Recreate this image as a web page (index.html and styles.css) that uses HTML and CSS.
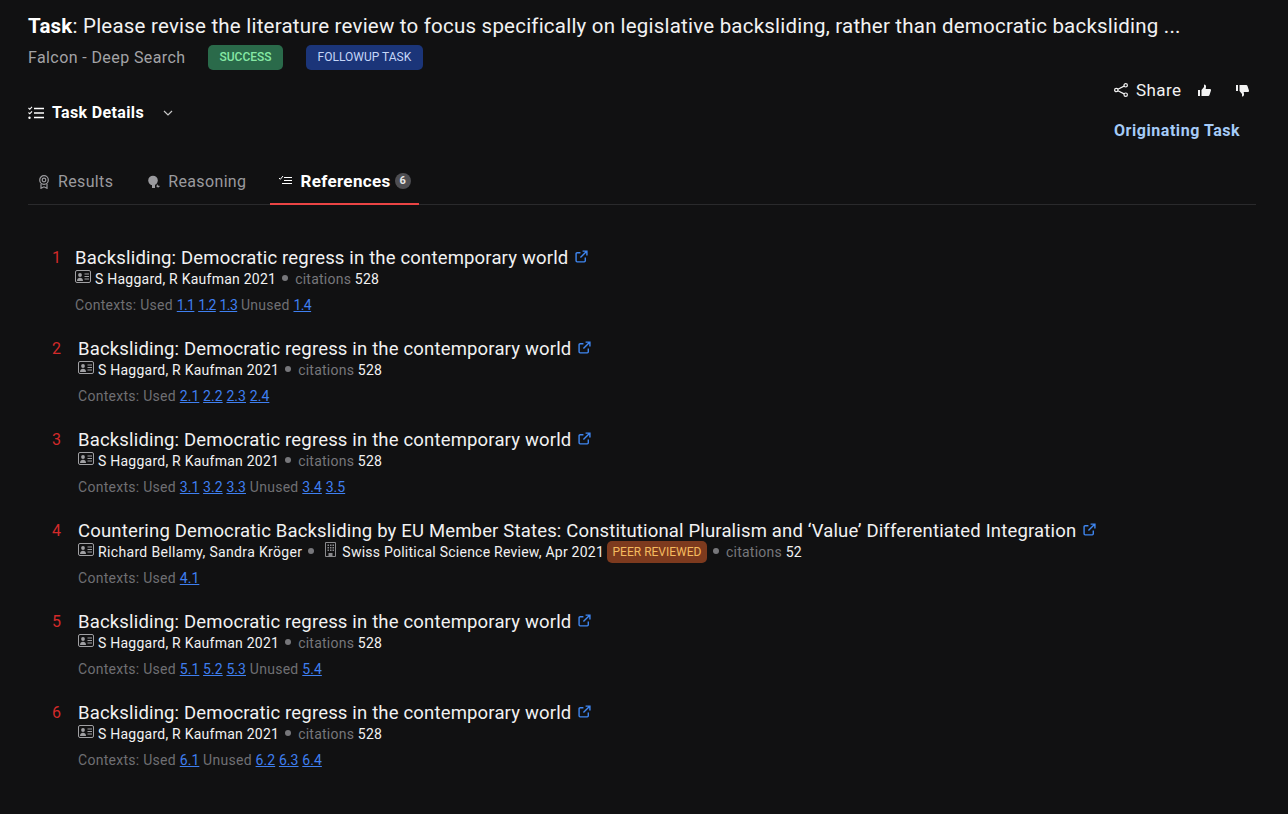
FILE: index.html
```html
<!DOCTYPE html>
<html lang="en">

<head>
    <meta charset="UTF-8">
    <title>Task References</title>
    <link rel="stylesheet" href="styles.css">
</head>

<body>
    <svg class="defs" width="0" height="0">
        <symbol id="card" viewBox="0 0 16 13">
            <rect x="0.5" y="0.5" width="15" height="12" rx="1.5" fill="none" stroke="currentColor"/>
            <circle cx="5" cy="5" r="1.9" fill="currentColor"/>
            <path d="M2 11c0-2.2 1.4-3.2 3-3.2s3 1 3 3.2z" fill="currentColor"/>
            <path d="M9.5 4h4.5M9.5 6.5h4.5M9.5 9h4.5" stroke="currentColor"/>
        </symbol>
        <symbol id="ext" viewBox="0 0 12 12">
            <path d="M9.5 7v3a1 1 0 0 1-1 1H2a1 1 0 0 1-1-1V3.500a1 1 0 0 1 1-1h3M7 1h4v4M11 1L5 7" fill="none" stroke="currentColor" stroke-width="1.300"/>
        </symbol>
    </svg>

    <header class="task-head">
        <h1 class="task-title"><b>Task</b>: Please revise the literature review to focus specifically on legislative backsliding, rather than democratic backsliding ...</h1>
        <div class="task-meta">
            <span class="agent">Falcon - Deep Search</span>
            <span class="badge badge-success">SUCCESS</span>
            <span class="badge badge-followup">FOLLOWUP TASK</span>
        </div>
        <div class="task-row">
            <div class="details">
                <svg class="details-icon" viewBox="0 0 16 14" width="16" height="14">
                    <path d="M6 2.500h10M6 7h10M6 11.500h10" stroke="currentColor" stroke-width="1.500"/>
                    <path d="M0.500 2l1.300 1.300L4 0.800M0.500 6.500l1.300 1.300L4 5.300" fill="none" stroke="currentColor" stroke-width="1.100"/>
                    <circle cx="1.500" cy="11.700" r="1.200" fill="currentColor"/>
                </svg>
                <span>Task Details</span>
                <svg class="chevron" viewBox="0 0 10 6" width="10" height="6">
                    <path d="M1 1l4 4 4-4" fill="none" stroke="currentColor" stroke-width="1.200"/>
                </svg>
            </div>
            <div class="actions">
                <div class="action-row">
                    <svg viewBox="0 0 14 14" width="14" height="14">
                        <g fill="none" stroke="currentColor" stroke-width="1.200">
                            <circle cx="11.700" cy="2.300" r="1.700"/>
                            <circle cx="2.300" cy="7" r="1.700"/>
                            <circle cx="11.700" cy="11.700" r="1.700"/>
                            <path d="M3.900 6.200l6.200-3.100M3.900 7.800l6.200 3.100"/>
                        </g>
                    </svg>
                    <span class="share">Share</span>
                    <svg class="thumb" viewBox="0 0 13 13" width="13" height="13">
                        <path d="M0 6h2v6H0zM3.500 6l2.500-3V0.500c1.500 0 2.200 1.200 2 2.500L7.700 5H12c1 0 1.200 1 .9 1.700l-1.500 4.600c-.2.500-.6.700-1.100.7H3.500z" fill="currentColor"/>
                    </svg>
                    <svg class="thumb thumb-down" viewBox="0 0 13 13" width="13" height="13">
                        <path d="M0 1h2v6H0zM3.500 7l2.500 3v2.500c1.500 0 2.200-1.200 2-2.500L7.700 8H12c1 0 1.200-1 .9-1.700L11.400 1.700C11.200 1.200 10.800 1 10.300 1H3.500z" fill="currentColor"/>
                    </svg>
                </div>
                <a class="originating">Originating Task</a>
            </div>
        </div>
    </header>

    <nav class="tabs">
        <div class="tab">
            <svg viewBox="0 0 12 14" width="12" height="14">
                <g fill="none" stroke="currentColor" stroke-width="1.200">
                    <circle cx="6" cy="5" r="4.300"/>
                    <circle cx="6" cy="5" r="1.800"/>
                    <path d="M3 9v4.300l3-1.500 3 1.500V9"/>
                </g>
            </svg>
            <span>Results</span>
        </div>
        <div class="tab tab-reasoning">
            <svg viewBox="0 0 14 14" width="14" height="14">
                <circle cx="6" cy="5.500" r="4.800" fill="currentColor"/>
                <path d="M5 10h3v3H5zM10 9l1 1.500 2 .5-1.500 1.500-2-.5z" fill="currentColor"/>
            </svg>
            <span>Reasoning</span>
        </div>
        <div class="tab tab-active">
            <svg viewBox="0 0 13 11" width="13" height="11">
                <path d="M5 2.500h8M5 5.500h8M3 8.500h10" stroke="currentColor" stroke-width="1.200"/>
                <path d="M0 3l1.300 1.300L4 1" fill="none" stroke="currentColor"/>
            </svg>
            <span>References</span>
            <span class="count">6</span>
        </div>
    </nav>

    <main class="refs">
        <article class="ref">
            <span class="ref-num">1</span>
            <div class="ref-body">
                <div class="ref-title">Backsliding: Democratic regress in the contemporary world <svg class="ext"><use href="#ext"/></svg></div>
                <div class="ref-meta">
                    <svg class="card"><use href="#card"/></svg>
                    <span>S Haggard, R Kaufman 2021</span>
                    <i class="dot"></i>
                    <span><span class="muted">citations</span> 528</span>
                </div>
                <div class="ref-contexts">Contexts: Used <a>1.1</a> <a>1.2</a> <a>1.3</a> Unused <a>1.4</a></div>
            </div>
        </article>
        <article class="ref">
            <span class="ref-num">2</span>
            <div class="ref-body">
                <div class="ref-title">Backsliding: Democratic regress in the contemporary world <svg class="ext"><use href="#ext"/></svg></div>
                <div class="ref-meta">
                    <svg class="card"><use href="#card"/></svg>
                    <span>S Haggard, R Kaufman 2021</span>
                    <i class="dot"></i>
                    <span><span class="muted">citations</span> 528</span>
                </div>
                <div class="ref-contexts">Contexts: Used <a>2.1</a> <a>2.2</a> <a>2.3</a> <a>2.4</a></div>
            </div>
        </article>
        <article class="ref">
            <span class="ref-num">3</span>
            <div class="ref-body">
                <div class="ref-title">Backsliding: Democratic regress in the contemporary world <svg class="ext"><use href="#ext"/></svg></div>
                <div class="ref-meta">
                    <svg class="card"><use href="#card"/></svg>
                    <span>S Haggard, R Kaufman 2021</span>
                    <i class="dot"></i>
                    <span><span class="muted">citations</span> 528</span>
                </div>
                <div class="ref-contexts">Contexts: Used <a>3.1</a> <a>3.2</a> <a>3.3</a> Unused <a>3.4</a> <a>3.5</a></div>
            </div>
        </article>
        <article class="ref">
            <span class="ref-num">4</span>
            <div class="ref-body">
                <div class="ref-title">Countering Democratic Backsliding by EU Member States: Constitutional Pluralism and ‘Value’ Differentiated Integration <svg class="ext"><use href="#ext"/></svg></div>
                <div class="ref-meta">
                    <svg class="card"><use href="#card"/></svg>
                    <span class="authors">Richard Bellamy, Sandra Kröger</span>
                    <i class="dot"></i>
                    <svg class="building" viewBox="0 0 11 15" width="11" height="15">
                        <path d="M0.500 0.500h10v14h-10z" fill="none" stroke="currentColor"/>
                        <path d="M2.500 2.500h1.500v1.500H2.500zM5 2.500h1.500v1.500H5zM7.500 2.500H9v1.500H7.500zM2.500 5h1.500v1.500H2.500zM5 5h1.500v1.500H5zM7.500 5H9v1.500H7.500zM2.500 7.500h1.500V9H2.500zM5 7.500h1.500V9H5zM7.500 7.500H9V9H7.500zM3.500 11h4v3.500h-4z" fill="currentColor"/>
                    </svg>
                    <span>Swiss Political Science Review, Apr 2021</span>
                    <span class="badge-peer">PEER REVIEWED</span>
                    <i class="dot"></i>
                    <span><span class="muted">citations</span> 52</span>
                </div>
                <div class="ref-contexts">Contexts: Used <a>4.1</a></div>
            </div>
        </article>
        <article class="ref">
            <span class="ref-num">5</span>
            <div class="ref-body">
                <div class="ref-title">Backsliding: Democratic regress in the contemporary world <svg class="ext"><use href="#ext"/></svg></div>
                <div class="ref-meta">
                    <svg class="card"><use href="#card"/></svg>
                    <span>S Haggard, R Kaufman 2021</span>
                    <i class="dot"></i>
                    <span><span class="muted">citations</span> 528</span>
                </div>
                <div class="ref-contexts">Contexts: Used <a>5.1</a> <a>5.2</a> <a>5.3</a> Unused <a>5.4</a></div>
            </div>
        </article>
        <article class="ref">
            <span class="ref-num">6</span>
            <div class="ref-body">
                <div class="ref-title">Backsliding: Democratic regress in the contemporary world <svg class="ext"><use href="#ext"/></svg></div>
                <div class="ref-meta">
                    <svg class="card"><use href="#card"/></svg>
                    <span>S Haggard, R Kaufman 2021</span>
                    <i class="dot"></i>
                    <span><span class="muted">citations</span> 528</span>
                </div>
                <div class="ref-contexts">Contexts: Used <a>6.1</a> Unused <a>6.2</a> <a>6.3</a> <a>6.4</a></div>
            </div>
        </article>
    </main>
</body>

</html>
```

FILE: styles.css
```css
* {
    box-sizing: border-box;
}

body {
    margin: 0;
    padding: 14px 32px 0 28px;
    background-color: #111112;
    color: #ffffff;
    font-family: "Roboto", "Liberation Sans", sans-serif;
}

.defs {
    position: absolute;
}

.task-title {
    margin: 0;
    font-size: 20.5px;
    line-height: 24px;
    letter-spacing: 0.215px;
    font-weight: 400;
    color: #f2f2f2;
    white-space: nowrap;
}

.task-title b {
    font-weight: 700;
    color: #ffffff;
}

.task-meta {
    display: flex;
    align-items: center;
    margin-top: 7px;
}

.agent {
    font-size: 16px;
    letter-spacing: 0.4px;
    color: #a3a3a6;
    margin-right: 23px;
}

.badge {
    font-size: 12px;
    height: 25px;
    line-height: 24px;
    padding: 0 10px;
    border-radius: 5px;
}

.badge-success {
    background-color: #2a6a4a;
    color: #86e8a4;
    font-weight: 500;
    padding: 0 11px;
    margin-right: 23px;
}

.badge-followup {
    background-color: #1b3579;
    color: #c5d6f8;
    padding: 0 12px;
}

.task-row {
    display: flex;
    justify-content: space-between;
    align-items: flex-start;
    margin-top: 8px;
}

.details {
    display: flex;
    align-items: center;
    margin-top: 25px;
    font-size: 16px;
    letter-spacing: 0.35px;
    font-weight: 700;
}

.details-icon {
    margin-right: 8px;
}

.chevron {
    margin-left: 19px;
    color: #c8c8c8;
}

.actions {
    width: 142px;
}

.action-row {
    display: flex;
    align-items: center;
    height: 20px;
    margin-top: 2px;
    color: #f2f2f2;
}

.share {
    font-size: 17px;
    letter-spacing: 0.4px;
    margin: 0 17px 0 8px;
}

.thumb-down {
    margin-left: 25px;
}

.originating {
    display: block;
    margin-top: 21px;
    font-size: 16px;
    letter-spacing: 0.55px;
    font-weight: 700;
    color: #a5cbf7;
    white-space: nowrap;
}

.tabs {
    display: flex;
    margin-top: 18px;
    height: 47px;
    border-bottom: 1px solid #2a2a2c;
}

.tab {
    display: flex;
    align-items: center;
    height: 47px;
    padding: 0 10px;
    margin-right: 14px;
    font-size: 16px;
    letter-spacing: 0.35px;
    color: #9a9a9e;
}

.tab svg {
    margin-right: 8px;
}

.tab-reasoning svg {
    margin-right: 7px;
}

.tab-active {
    border-bottom: 2px solid #ea4444;
    color: #ffffff;
    font-size: 17px;
    letter-spacing: 0.35px;
    font-weight: 700;
    padding: 0 8px 0 9px;
}

.count {
    width: 16px;
    height: 16px;
    margin-left: 4px;
    border-radius: 50%;
    background-color: #4e4e52;
    color: #e8e8e8;
    font-size: 11px;
    letter-spacing: 0;
    line-height: 16px;
    text-align: center;
}

.refs {
    padding: 42px 0 0 24px;
}

.ref {
    display: flex;
    height: 91px;
}

.ref-num {
    font-size: 16px;
    line-height: 22px;
    color: #d32a2a;
    margin-right: 17px;
}

.ref:first-child .ref-num {
    margin-right: 14px;
}

.ref-title {
    font-size: 18.5px;
    line-height: 22px;
    letter-spacing: 0.17px;
    color: #f2f2f2;
    white-space: nowrap;
}

.ext {
    width: 13px;
    height: 13px;
    margin-left: 2px;
    vertical-align: 1px;
    color: #3f86f0;
}

.ref-meta {
    display: flex;
    align-items: center;
    height: 20px;
    font-size: 14px;
    letter-spacing: 0.24px;
    color: #f2f2f2;
    white-space: pre;
}

.authors {
    letter-spacing: 0.34px;
}

.card {
    width: 16px;
    height: 13px;
    margin: -6px 4px 0 0;
    color: #a0a0a3;
}

.building {
    margin: -5px 6px 0 4px;
    color: #8a8a8d;
}

.dot {
    width: 6px;
    height: 6px;
    margin: -3px 7px 0 6px;
    border-radius: 50%;
    background-color: #77777b;
}

.muted {
    color: #77777b;
}

.badge-peer {
    margin-left: 3px;
    padding: 0 5.5px;
    height: 22px;
    line-height: 22px;
    border-radius: 5px;
    background-color: #7d3a1e;
    color: #f5ba5e;
    font-size: 12px;
    letter-spacing: 0;
}

.ref-contexts {
    margin-top: 6px;
    font-size: 14px;
    letter-spacing: 0.28px;
    line-height: 20px;
    color: #6f6f73;
}

.ref-contexts a {
    color: #3f7ff0;
    letter-spacing: 0.05px;
    text-decoration: underline;
}

.ref:first-child .ref-contexts a {
    letter-spacing: -0.6px;
}
```
